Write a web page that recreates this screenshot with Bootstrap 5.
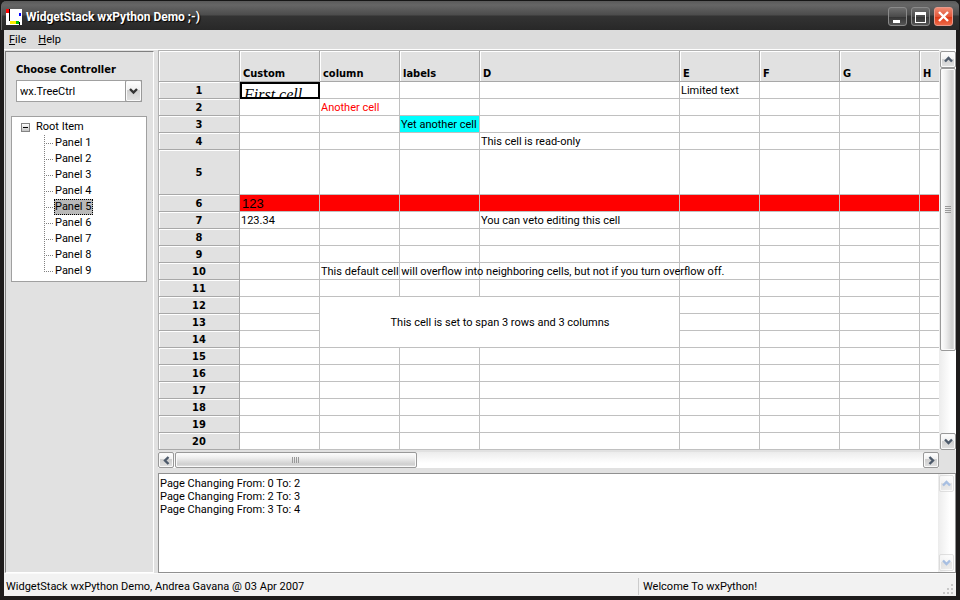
<!DOCTYPE html>
<html lang="en">
<head>
<meta charset="utf-8">
<meta name="viewport" content="width=device-width, initial-scale=1">
<title>WidgetStack wxPython Demo</title>
<link href="https://cdn.jsdelivr.net/npm/bootstrap@5.3.0/dist/css/bootstrap.min.css" rel="stylesheet">
<style>
  :root { --face: #e1e1e1; --line: #c0c0c0; --edge: #a0a0a0; }
  body { font: 11px/13px Roboto, "DejaVu Sans Condensed", sans-serif; color: #000; background: #222; }
  button { color: inherit; }
  .bold-ui { font-family: "DejaVu Sans Condensed", "Noto Sans", sans-serif; font-weight: 700; }

  .app-window { border: solid #1e1c1c; border-width: 0 4px 4px; }
  .title-bar { height: 30px; margin: 0 -4px; padding: 2px 6px 0 5px; border: 1px solid #161616; border-bottom: 0; border-radius: 6px 6px 0 0;
    background: linear-gradient(#5a5a5a 0, #666 4px, #4c4c4c 14px, #333 15px, #282828 100%); box-shadow: inset 1px 0 #666; }
  .title-text { font: bold 12px/18px Roboto, sans-serif; color: #fff; text-shadow: 1px 1px 1px #000; }
  .win-btn { width: 19px; height: 19px; border: 1px solid #8a8a8a; border-radius: 3px; background: linear-gradient(#6e6e6e, #4b4b4b 50%, #333 51%, #555); }
  .win-close { border-color: #e89a8c; background: linear-gradient(#f08a72, #e2573a 50%, #dc3513 51%, #ee6a48); }
  .menu-strip { background: #dcdcdc; height: 20px; padding: 3px 5px; border-bottom: 1px solid #fff; }
  .menu-strip a { color: #000; text-decoration: none; }

  .work { background: var(--face); padding-left: 1px; gap: 4px; }
  .side { width: 149px; margin-top: 1px; padding: 11px 6px 0 5px; border: 1px solid; border-color: #808080 #fff #fff #808080; }
  .side-label { padding-left: 5px; }
  .combo { width: 126px; height: 22px; margin: 4px 0 0 5px; }
  .combo select { border: 1px solid var(--edge); background: #fff; padding: 0 20px 0 3px; appearance: none; color: #000; outline: 0; }
  .combo-arrow { width: 17px; pointer-events: none; }
  .xp-btn { border: 1px solid #999; border-radius: 2px; background: linear-gradient(#fff, #f0f0f0 45%, #cfcfcf 46%, #e2e2e2); box-shadow: inset 0 0 0 1px #fafafa; }

  .tree { width: 136px; margin-top: 14px; background: #fff; border: 1px solid var(--edge); padding: 2px 0 2px 9px; line-height: 16px; }
  .tree-toggle { width: 9px; height: 9px; border: 1px solid #848484; background: linear-gradient(#fff, #c4c4c4); }
  .tree-root { gap: 6px; }
  .tree-kids { margin-left: 23px; }
  .tree-kids li { height: 16px; }
  .tree-kids li::before { content: ""; width: 10px; height: 16px; flex: none;
    background: repeating-linear-gradient(#808080 0 1px, transparent 1px 2px) 0 0 / 1px 100% no-repeat,
                repeating-linear-gradient(90deg, #808080 0 1px, transparent 1px 2px) 0 8px / 100% 1px no-repeat; }
  .tree-kids li:last-child::before { background-size: 1px 8px, 100% 1px; }
  .tree-kids button { line-height: 14px; border: 1px solid transparent; padding: 0 1px 0 0; background: none; }
  .tree-kids .picked { background: #b9b9b9; border: 1px dotted #000; }

  .sheet-view { border: solid #b0b0b0; border-width: 1px 0 0 1px; background: #fff; }
  .sheet { table-layout: fixed; width: 801px; border-collapse: separate; border-spacing: 0; }
  .sheet .c-head { width: 81px; }
  .sheet .c-std { width: 80px; }
  .sheet .c-wide { width: 200px; }
  .sheet th, .sheet td { padding: 2px 0 0 1px; height: 17px; border: solid var(--line); border-width: 0 1px 1px 0; white-space: nowrap; line-height: 14px; vertical-align: middle; }
  .sheet th { background: var(--face); border-color: #a8a8a8; box-shadow: inset 1px 1px #fff; text-align: center; padding-left: 0; }
  .sheet thead th { height: 31px; text-align: left; vertical-align: bottom; padding: 0 0 0 3px; }
  .sheet .tall td, .sheet .tall th { height: 45px; }
  .sheet .alert-row td { background: #f00; }
  .sheet .red-text { color: #f00; }
  .sheet .cyan-cell { background: #0ff; }
  .sheet td.cursor-cell { border: 2px solid #000; padding: 0; }
  .cursor-cell div { height: 13px; overflow: hidden; font: italic 16px/22px "Liberation Serif", serif; padding-left: 2px; }
  .sheet td.big-num { font: 13px/14px "Liberation Sans", sans-serif; -webkit-text-stroke: 0; padding-left: 2px; }

  .vbar { width: 17px; background: linear-gradient(90deg, #ececec, #fff 70%); padding: 1px 0 0 1px; }
  .vbar .xp-btn { height: 17px; }
  .vthumb { flex: 0 0 283px; background: linear-gradient(90deg, #fff, #eee 35%, #cfcfcf 80%, #e8e8e8); }
  .hbar { height: 16px; background: linear-gradient(#ececec, #fff 70%); margin: 2px 17px 0 0; }
  .hbar .xp-btn { width: 16px; }
  .hbar .hthumb { flex: 0 0 242px; background: linear-gradient(#fdfdfd, #eee 35%, #cfcfcf 80%, #e8e8e8); margin-left: 1px; }
  .log { height: 100px; margin-top: 5px; border: 1px solid #909090; background: #fff; }
  .log textarea { resize: none; outline: 0; padding: 3px 1px; line-height: 13px; color: #000; }
  .log .vbar { padding: 1px; }
  .log .xp-btn { opacity: .55; border-color: #ccc; }

  .status { background: #f2f2f2; height: 23px; border-top: 1px solid #fafafa; padding: 2px 2px 0; }
  .status-b { flex: 0 0 33.333%; border-left: 1px solid #ccc; padding-left: 4px; line-height: 17px; }
</style>
<script src="https://cdn.jsdelivr.net/npm/bootstrap@5.3.0/dist/js/bootstrap.bundle.min.js"></script>
</head>
<body>
<div class="app-window vh-100 d-flex flex-column">
  <header class="title-bar d-flex align-items-center">
    <svg width="16" height="16" viewBox="0 0 16 16" aria-hidden="true" shape-rendering="crispEdges"><path fill="#fff" d="M0 0h16v16H0z"/><path d="M3 0h1v4H3zM3 4h1v8H3zM13 13h1v3h-1z" fill="#000"/><path fill="#f00" d="M0 0h3v4H0z"/><path fill="#fe0" d="M4 12h6v3H4z"/><path fill="#0b0" d="M10 12h3v3h-3z"/><path fill="#00f" d="M13 4h2v3h-2z"/></svg>
    <h1 class="title-text mb-0 ms-1 flex-grow-1">WidgetStack wxPython Demo ;-)</h1>
    <div class="d-flex gap-1">
      <button class="win-btn p-0 d-flex" aria-label="Minimize"><svg width="17" height="17"><path d="M4 12h7v3H4z" fill="#fff"/></svg></button>
      <button class="win-btn p-0 d-flex" aria-label="Maximize"><svg width="17" height="17"><path fill-rule="evenodd" d="M3 4h11v11H3zM4 7v7h9V7z" fill="#fff"/></svg></button>
      <button class="win-btn win-close p-0 d-flex" aria-label="Close"><svg width="17" height="17"><path d="M4 4l9 9M13 4l-9 9" stroke="#fff" stroke-width="2.4"/></svg></button>
    </div>
  </header>
  <nav class="menu-strip d-flex gap-2 align-items-center">
    <a href="#" class="me-1"><u>F</u>ile</a><a href="#"><u>H</u>elp</a>
  </nav>

  <main class="work d-flex flex-grow-1">
    <aside class="side flex-shrink-0">
      <label for="controller" class="bold-ui side-label d-block">Choose Controller</label>
      <div class="combo position-relative">
        <select id="controller" class="w-100 h-100"><option>wx.TreeCtrl</option></select>
        <span class="combo-arrow xp-btn position-absolute top-0 end-0 h-100 d-flex align-items-center justify-content-center"><svg width="9" height="7"><path d="M1 1l3.500 3.500L8 1" fill="none" stroke="#333" stroke-width="2.400"/></svg></span>
      </div>
      <div class="tree">
        <div class="tree-root d-flex align-items-center"><button class="tree-toggle p-0 d-flex" aria-label="Collapse"><svg width="7" height="7"><path d="M1 3h5v1H1z"/></svg></button><span>Root Item</span></div>
        <ul class="tree-kids list-unstyled mb-0">
          <li class="d-flex"><button>Panel 1</button></li>
          <li class="d-flex"><button>Panel 2</button></li>
          <li class="d-flex"><button>Panel 3</button></li>
          <li class="d-flex"><button>Panel 4</button></li>
          <li class="d-flex"><button class="picked">Panel 5</button></li>
          <li class="d-flex"><button>Panel 6</button></li>
          <li class="d-flex"><button>Panel 7</button></li>
          <li class="d-flex"><button>Panel 8</button></li>
          <li class="d-flex"><button>Panel 9</button></li>
        </ul>
      </div>
    </aside>

    <section class="d-flex flex-column flex-grow-1 overflow-hidden">
      <div class="d-flex flex-grow-1">
        <div class="sheet-view flex-grow-1 position-relative">
          <div class="position-absolute top-0 start-0 w-100 h-100 overflow-hidden">
          <table class="sheet">
            <colgroup><col class="c-head"><col class="c-std"><col class="c-std"><col class="c-std"><col class="c-wide"><col class="c-std"><col class="c-std"><col class="c-std"><col class="c-std"></colgroup>
            <thead><tr class="bold-ui"><th></th><th>Custom</th><th>column</th><th>labels</th><th>D</th><th>E</th><th>F</th><th>G</th><th>H</th></tr></thead>
            <tbody>
              <tr><th class="bold-ui">1</th><td class="cursor-cell"><div>First cell</div></td><td></td><td></td><td></td><td>Limited text</td><td></td><td></td><td></td></tr>
              <tr><th class="bold-ui">2</th><td></td><td class="red-text">Another cell</td><td></td><td></td><td></td><td></td><td></td><td></td></tr>
              <tr><th class="bold-ui">3</th><td></td><td></td><td class="cyan-cell">Yet another cell</td><td></td><td></td><td></td><td></td><td></td></tr>
              <tr><th class="bold-ui">4</th><td></td><td></td><td></td><td>This cell is read-only</td><td></td><td></td><td></td><td></td></tr>
              <tr class="tall"><th class="bold-ui">5</th><td></td><td></td><td></td><td></td><td></td><td></td><td></td><td></td></tr>
              <tr class="alert-row"><th class="bold-ui">6</th><td class="big-num">123</td><td></td><td></td><td></td><td></td><td></td><td></td><td></td></tr>
              <tr><th class="bold-ui">7</th><td>123.34</td><td></td><td></td><td>You can veto editing this cell</td><td></td><td></td><td></td><td></td></tr>
              <tr><th class="bold-ui">8</th><td></td><td></td><td></td><td></td><td></td><td></td><td></td><td></td></tr>
              <tr><th class="bold-ui">9</th><td></td><td></td><td></td><td></td><td></td><td></td><td></td><td></td></tr>
              <tr><th class="bold-ui">10</th><td></td><td>This default cell will overflow into neighboring cells, but not if you turn overflow off.</td><td></td><td></td><td></td><td></td><td></td><td></td></tr>
              <tr><th class="bold-ui">11</th><td></td><td></td><td></td><td></td><td></td><td></td><td></td><td></td></tr>
              <tr><th class="bold-ui">12</th><td></td><td colspan="3" rowspan="3" class="text-center">This cell is set to span 3 rows and 3 columns</td><td></td><td></td><td></td><td></td></tr>
              <tr><th class="bold-ui">13</th><td></td><td></td><td></td><td></td><td></td></tr>
              <tr><th class="bold-ui">14</th><td></td><td></td><td></td><td></td><td></td></tr>
              <tr><th class="bold-ui">15</th><td></td><td></td><td></td><td></td><td></td><td></td><td></td><td></td></tr>
              <tr><th class="bold-ui">16</th><td></td><td></td><td></td><td></td><td></td><td></td><td></td><td></td></tr>
              <tr><th class="bold-ui">17</th><td></td><td></td><td></td><td></td><td></td><td></td><td></td><td></td></tr>
              <tr><th class="bold-ui">18</th><td></td><td></td><td></td><td></td><td></td><td></td><td></td><td></td></tr>
              <tr><th class="bold-ui">19</th><td></td><td></td><td></td><td></td><td></td><td></td><td></td><td></td></tr>
              <tr><th class="bold-ui">20</th><td></td><td></td><td></td><td></td><td></td><td></td><td></td><td></td></tr>
              <tr><th></th><td></td><td></td><td></td><td></td><td></td><td></td><td></td><td></td></tr>
            </tbody>
          </table>
          </div>
        </div>
        <div class="vbar d-flex flex-column">
          <button class="xp-btn p-0 d-flex align-items-center justify-content-center" aria-label="Scroll up"><svg width="9" height="7"><path d="M1 5.500L4.500 2 8 5.500" fill="none" stroke="#4d5a6b" stroke-width="2.400"/></svg></button>
          <div class="xp-btn vthumb d-flex align-items-center justify-content-center"><svg width="6" height="8" shape-rendering="crispEdges"><path d="M0 0h6v1H0zM0 2h6v1H0zM0 4h6v1H0zM0 6h6v1H0z" fill="#999"/></svg></div>
          <button class="xp-btn p-0 mt-auto d-flex align-items-center justify-content-center" aria-label="Scroll down"><svg width="9" height="7"><path d="M1 1.500L4.500 5 8 1.500" fill="none" stroke="#4d5a6b" stroke-width="2.400"/></svg></button>
        </div>
      </div>
      <div class="hbar d-flex">
        <button class="xp-btn p-0 d-flex align-items-center justify-content-center" aria-label="Scroll left"><svg width="7" height="9"><path d="M5.500 1L2 4.500 5.500 8" fill="none" stroke="#4d5a6b" stroke-width="2.400"/></svg></button>
        <div class="xp-btn hthumb d-flex align-items-center justify-content-center"><svg width="8" height="6" shape-rendering="crispEdges"><path d="M0 0h1v6H0zM2 0h1v6H2zM4 0h1v6H4zM6 0h1v6H6z" fill="#999"/></svg></div>
        <button class="xp-btn p-0 ms-auto d-flex align-items-center justify-content-center" aria-label="Scroll right"><svg width="7" height="9"><path d="M1.500 1L5 4.500 1.500 8" fill="none" stroke="#4d5a6b" stroke-width="2.400"/></svg></button>
      </div>
      <div class="log d-flex">
        <textarea class="flex-grow-1 border-0" readonly aria-label="Event log">Page Changing From: 0 To: 2
Page Changing From: 2 To: 3
Page Changing From: 3 To: 4</textarea>
        <div class="vbar d-flex flex-column justify-content-between">
          <button class="xp-btn p-0 d-flex align-items-center justify-content-center" disabled aria-label="Scroll log up"><svg width="9" height="7"><path d="M1 5.500L4.500 2 8 5.500" fill="none" stroke="#6590d0" stroke-width="2.400"/></svg></button>
          <button class="xp-btn p-0 d-flex align-items-center justify-content-center" disabled aria-label="Scroll log down"><svg width="9" height="7"><path d="M1 1.500L4.500 5 8 1.500" fill="none" stroke="#6590d0" stroke-width="2.400"/></svg></button>
        </div>
      </div>
    </section>
  </main>
  <footer class="status d-flex align-items-center">
    <div class="flex-grow-1">WidgetStack wxPython Demo, Andrea Gavana @ 03 Apr 2007</div>
    <div class="status-b d-flex justify-content-between"><span>Welcome To wxPython!</span>
      <svg class="align-self-end" width="11" height="11" shape-rendering="crispEdges"><path d="M8 0h2v2H8zM4 4h2v2H4zM8 4h2v2H8zM0 8h2v2H0zM4 8h2v2H4zM8 8h2v2H8z" fill="#c8c8c8"/></svg></div>
  </footer>
</div>
</body>
</html>
